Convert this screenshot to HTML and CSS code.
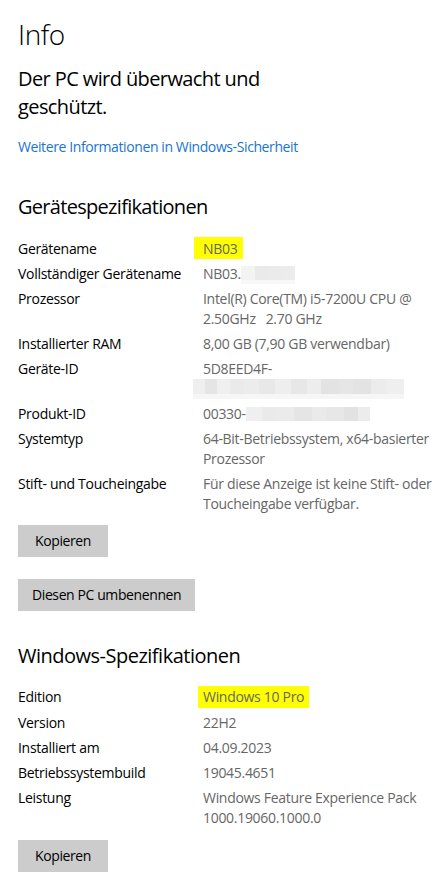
FILE: index.html
```html
<!DOCTYPE html>
<html lang="de">
<head>
<meta charset="utf-8">
<title>Info</title>
<link rel="stylesheet" href="styles.css">
</head>
<body>
<main class="page">
  <h1 class="title">Info</h1>
  <p class="status">Der PC wird überwacht und<br>geschützt.</p>
  <a class="link" href="#">Weitere Informationen in Windows-Sicherheit</a>

  <h2 class="heading heading-device">Gerätespezifikationen</h2>
  <dl class="specs">
    <div class="row"><dt>Gerätename</dt><dd><span class="mark mark-name">NB03</span></dd></div>
    <div class="row"><dt>Vollständiger Gerätename</dt><dd>NB03.<span class="blur blur-host"></span></dd></div>
    <div class="row"><dt>Prozessor</dt><dd>Intel(R) Core(TM) i5-7200U CPU @<br>2.50GHz&nbsp;&nbsp;&nbsp;2.70 GHz</dd></div>
    <div class="row"><dt>Installierter RAM</dt><dd>8,00 GB (7,90 GB verwendbar)</dd></div>
    <div class="row"><dt>Geräte-ID</dt><dd>5D8EED4F-<br><span class="blur blur-id"></span></dd></div>
    <div class="row"><dt>Produkt-ID</dt><dd>00330-<span class="blur blur-product"></span></dd></div>
    <div class="row"><dt>Systemtyp</dt><dd>64-Bit-Betriebssystem, x64-basierter<br>Prozessor</dd></div>
    <div class="row"><dt>Stift- und Toucheingabe</dt><dd>Für diese Anzeige ist keine Stift- oder<br>Toucheingabe verfügbar.</dd></div>
  </dl>
  <div class="actions actions-device">
    <button class="btn">Kopieren</button>
    <button class="btn">Diesen PC umbenennen</button>
  </div>

  <h2 class="heading heading-windows">Windows-Spezifikationen</h2>
  <dl class="specs">
    <div class="row"><dt>Edition</dt><dd><span class="mark mark-edition">Windows 10 Pro</span></dd></div>
    <div class="row"><dt>Version</dt><dd>22H2</dd></div>
    <div class="row"><dt>Installiert am</dt><dd>04.09.2023</dd></div>
    <div class="row"><dt>Betriebssystembuild</dt><dd>19045.4651</dd></div>
    <div class="row"><dt>Leistung</dt><dd>Windows Feature Experience Pack<br>1000.19060.1000.0</dd></div>
  </dl>
  <div class="actions actions-windows">
    <button class="btn">Kopieren</button>
  </div>
</main>
</body>
</html>
```

FILE: styles.css
```css
html, body {
  margin: 0;
  padding: 0;
  background: #ffffff;
}

body {
  font-family: "Open Sans", "Noto Sans", "Liberation Sans", sans-serif;
  color: #000000;
}

.page {
  padding: 14px 0 0 18px;
  display: flex;
  flex-direction: column;
  align-items: flex-start;
}

.title {
  margin: 0;
  font-size: 28px;
  font-weight: 300;
  line-height: 40px;
  letter-spacing: -0.4px;
}

.status {
  margin: 11px 0 0;
  font-size: 20px;
  font-weight: 400;
  line-height: 28px;
  letter-spacing: -0.6px;
}

.link {
  margin-top: 16px;
  font-size: 14px;
  line-height: 20px;
  color: #1874d0;
  text-decoration: none;
  letter-spacing: -0.4px;
}

.heading {
  margin: 0;
  font-size: 20px;
  font-weight: 400;
  line-height: 28px;
  letter-spacing: -0.7px;
}

.heading-device { margin-top: 36px; }
.heading-windows { margin-top: 31px; letter-spacing: -0.5px; }

.specs {
  margin: 18px 0 0;
  display: flex;
  flex-direction: column;
  gap: 5px;
  font-size: 14px;
  line-height: 20px;
  letter-spacing: -0.3px;
}

.heading-windows + .specs { margin-top: 17px; }

.row {
  display: grid;
  grid-template-columns: 185px auto;
}

.row dt {
  color: #000000;
  white-space: nowrap;
}

.row dd {
  margin: 0;
  color: #666666;
  white-space: nowrap;
}

.mark {
  background: #ffff00;
  display: inline-block;
  line-height: 20px;
}

.mark-name {
  padding: 2px 6px 0 9px;
  margin: -2px 0 0 -9px;
}

.mark-edition {
  padding: 1px 5px 1px 5px;
  margin: -1px 0 0 -5px;
}

.blur {
  display: inline-block;
  vertical-align: top;
}

.blur-host {
  width: 54px;
  height: 18px;
  margin-top: 2px;
  background:
    linear-gradient(90deg, #f3f3f3 0 14px, #eaeaea 14px 28px, #ebebeb 28px 40px, #ececec 40px 54px);
  box-shadow: inset 0 -4px 0 #f7f7f7;
}

.blur-id {
  width: 211px;
  height: 20px;
  margin-left: -10px;
  background:
    linear-gradient(90deg, #efefef 0 12px, #e5e5e5 12px 24px, #efefef 24px 37px, #eaeaea 37px 51px, #ececec 51px 66px, #e8e8e8 66px 82px, #eeeeee 82px 98px, #e7e7e7 98px 114px, #ededed 114px 128px, #e3e3e3 128px 146px, #e6e6e6 146px 160px, #e3e3e3 160px 178px, #ececec 178px 194px, #efefef 194px 211px);
  box-shadow: inset 0 -5px 0 #f6f6f6;
}

.blur-product {
  width: 124px;
  height: 14px;
  margin-top: 3px;
  background:
    linear-gradient(90deg, #efefef 0 16px, #eaeaea 16px 32px, #ebebeb 32px 48px, #e5e5e5 48px 66px, #eaeaea 66px 80px, #e7e7e7 80px 98px, #e2e2e2 98px 112px, #ececec 112px 124px);
}

.actions {
  display: flex;
  flex-direction: column;
  align-items: flex-start;
  gap: 22px;
}

.actions-device { margin-top: 11px; }
.actions-windows { margin-top: 12px; }

.btn {
  font-family: inherit;
  font-size: 14px;
  letter-spacing: -0.4px;
  color: #000000;
  background: #cccccc;
  border: 0;
  border-radius: 0;
  height: 32px;
  min-width: 90px;
  padding: 0 14px;
  line-height: 20px;
}
```
